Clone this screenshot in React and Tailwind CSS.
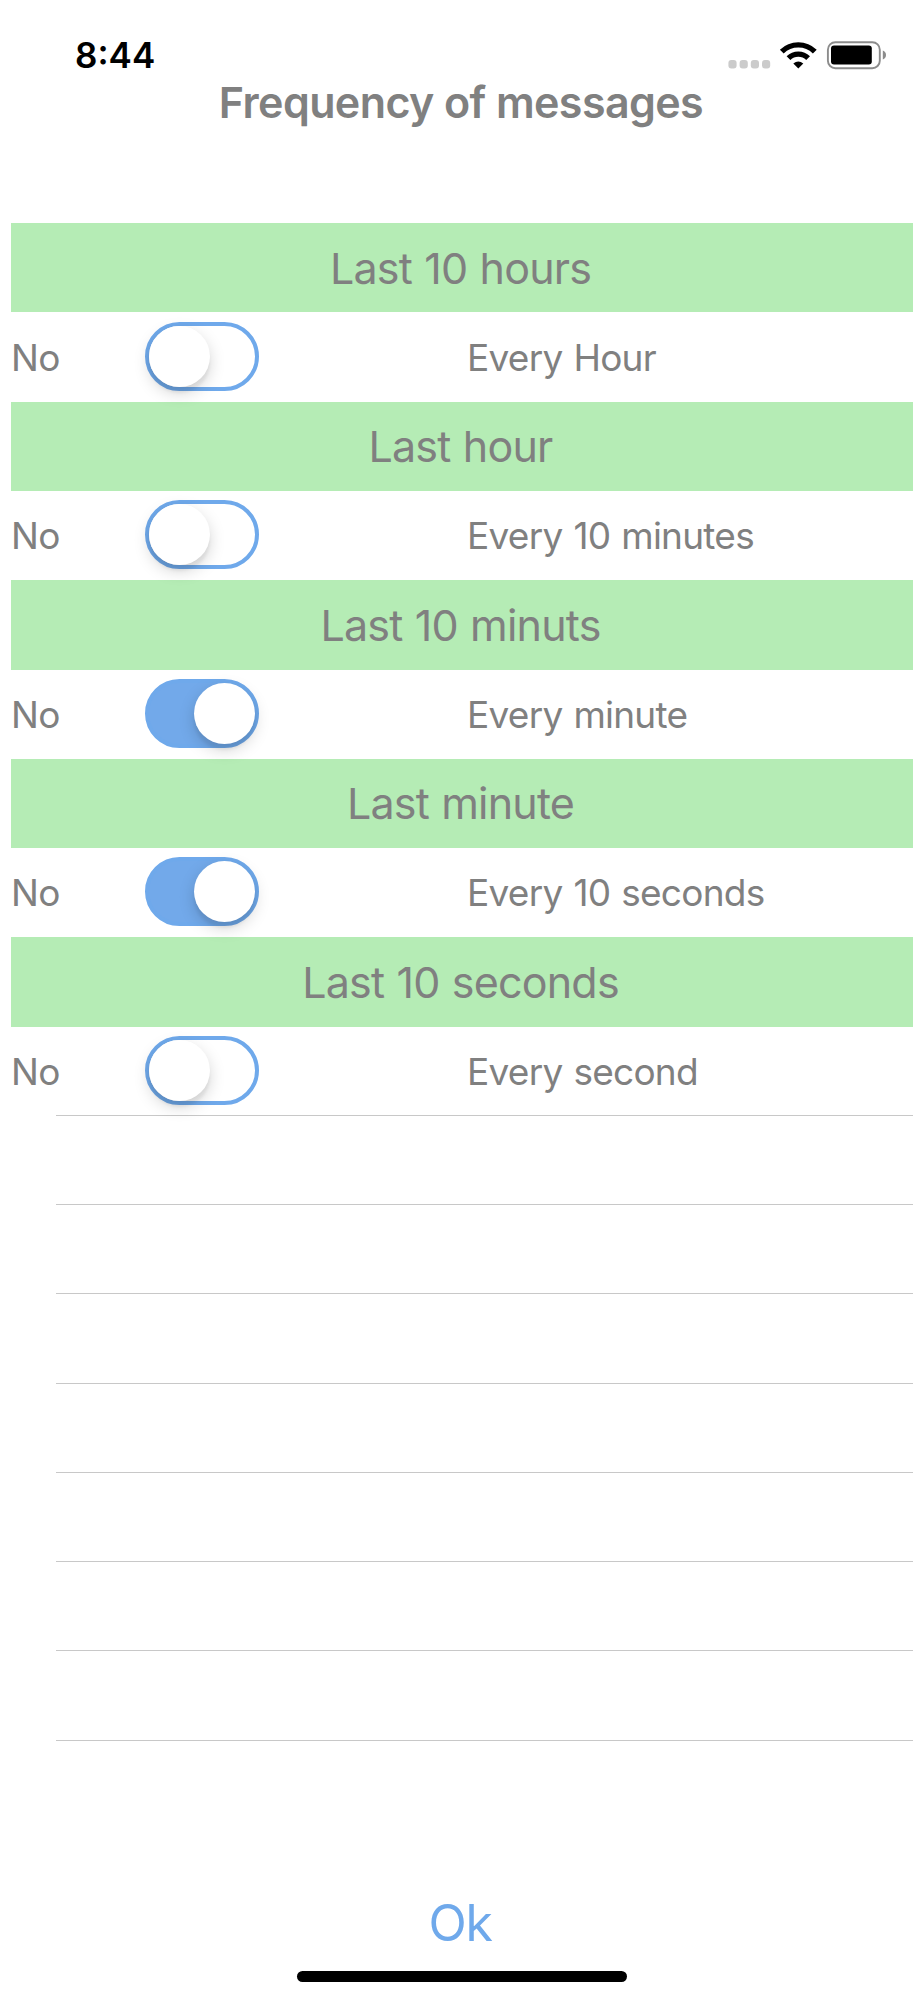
import { useState } from 'react';

const sections = [
    { title: 'Last 10 hours', label: 'Every Hour', on: false },
    { title: 'Last hour', label: 'Every 10 minutes', on: false },
    { title: 'Last 10 minuts', label: 'Every minute', on: true },
    { title: 'Last minute', label: 'Every 10 seconds', on: true },
    { title: 'Last 10 seconds', label: 'Every second', on: false },
];

function StatusBar() {
    return (
        <div className="flex h-[82px] items-start justify-between pl-[75px] pr-[38px] text-black">
            <span className="mt-[29px] text-[35px] leading-[52px] font-semibold">8:44</span>

            <svg className="mt-[36px]" width="160" height="36" viewBox="0 0 160 36">
                {/* Signal dots */}
                <g fill="#cbcbcb">
                    <rect x="2.4" y="24" width="8.2" height="8.6" rx="3" />
                    <rect x="13.6" y="24" width="8.2" height="8.6" rx="3" />
                    <rect x="24.8" y="24" width="8.2" height="8.6" rx="3" />
                    <rect x="36" y="24" width="8.2" height="8.6" rx="3" />
                </g>

                {/* Wifi */}
                <g fill="none" stroke="#000" strokeWidth="5.4">
                    <path d="M55.8 15.6 A23.5 23.5 0 0 1 88.8 15.6" />
                    <path d="M62.5 22.1 A14 14 0 0 1 82.1 22.1" />
                </g>
                <path d="M67.3 27.6 Q72.3 23.3 77.3 27.6 L72.3 32.4 Z" fill="#000" />

                {/* Battery */}
                <rect x="101.9" y="6.2" width="51.9" height="26" rx="7.5" fill="none" stroke="#8c8c8c" strokeWidth="1.9" />
                <rect x="105" y="9.6" width="40.8" height="19" rx="3" fill="#000" />
                <path d="M156.8 14.6 Q160 16 160 19.1 Q160 22.2 156.8 23.6 Z" fill="#8c8c8c" />
            </svg>
        </div>
    );
}

function Toggle({ checked, onChange }) {
    return (
        <button
            type="button"
            role="switch"
            aria-checked={checked}
            onClick={onChange}
            className={`flex h-[69px] w-[114px] items-center rounded-full border-[4px] border-[#6fa9eb] ${checked ? 'justify-end bg-[#72a9ea]' : 'justify-start bg-white'}`}
        >
            <span className="size-[61px] shrink-0 rounded-full bg-white shadow-[0_6px_16px_rgba(0,0,0,0.17),0_6px_3px_rgba(0,0,0,0.05)]" />
        </button>
    );
}

function Section({ title, label, checked, onChange }) {
    return (
        <section>
            <h2 className="flex h-[89.28px] items-center justify-center bg-[#b5ecb5] pr-[3px] text-[43px] font-normal tracking-[-0.8px] [word-spacing:1px]">
                {title}
            </h2>
            <div className="flex h-[89.28px] items-center text-[37px] tracking-[-0.75px] [word-spacing:1.3px]">
                <span className="mt-[1px] w-[134px]">No</span>
                <div className="-mt-[2px] w-[322px]">
                    <Toggle checked={checked} onChange={onChange} />
                </div>
                <span className="mt-[1px]">{label}</span>
            </div>
        </section>
    );
}

export default function App() {
    const [values, setValues] = useState(sections.map((s) => s.on));

    const toggle = (index) => {
        setValues(values.map((v, i) => (i === index ? !v : v)));
    };

    return (
        <div className="flex h-[2000px] w-[924px] flex-col overflow-hidden bg-white font-['Inter',sans-serif] text-[#808080]">
            <StatusBar />

            <h1 className="-mt-[1px] pr-[2px] text-center text-[43px] leading-[42px] font-semibold tracking-[-0.6px]">
                Frequency of messages
            </h1>

            {/* Table */}
            <main className="mt-[100.2px] ml-[11px] w-[902px]">
                {sections.map((s, i) => (
                    <Section key={s.title} title={s.title} label={s.label} checked={values[i]} onChange={() => toggle(i)} />
                ))}
                {/* Empty rows */}
                <div className="-mt-[1px] ml-[45px]">
                    {[...Array(8)].map((_, i) => (
                        <div key={i} className="h-[89.28px] border-t border-[#c8c8c8]" />
                    ))}
                </div>
            </main>

            <footer className="mt-auto flex flex-col items-center pb-[18px]">
                <button type="button" className="mb-[18px] pr-[4px] text-[50px] leading-[60px] tracking-[-1.4px] text-[#6fa9eb]">Ok</button>
                <div className="h-[11px] w-[330px] rounded-full bg-black" />
            </footer>
        </div>
    );
}
